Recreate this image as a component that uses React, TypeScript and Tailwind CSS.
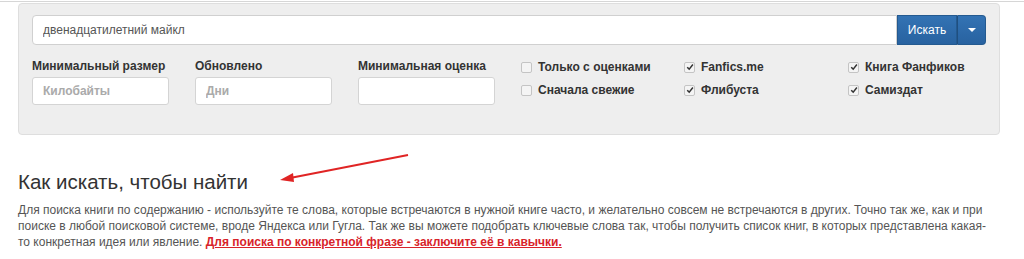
function Check({ label, checked }: { label: string; checked?: boolean }) {
    return (
        <label className="flex items-center gap-[6px] h-[20px] text-[12px] font-bold text-[#333]">
            <span className="w-[11px] h-[11px] rounded-[2px] border border-[#c4c4c4] bg-[#f4f4f4] flex items-center justify-center">
                {checked && (
                    <svg viewBox="0 0 10 10" className="w-[8px] h-[8px]">
                        <path d="M1.5 5.2 L4 7.6 L8.6 1.8" fill="none" stroke="#333" strokeWidth="1.8" />
                    </svg>
                )}
            </span>
            {label}
        </label>
    );
}

function Field({ label, placeholder }: { label: string; placeholder?: string }) {
    return (
        <div className="flex flex-col">
            <div className="text-[12px] font-bold text-[#333] h-[18px] leading-[18px] mt-[-3px]">{label}</div>
            <input
                type="text"
                placeholder={placeholder}
                className="mt-[2px] w-[137px] h-[28px] px-[10px] bg-white border border-[#d4d4d4] rounded-[3px] text-[12px] font-bold placeholder:text-[#aaa] outline-none"
            />
        </div>
    );
}

export default function App() {
    return (
        <div className="w-[1024px] h-[259px] bg-white overflow-hidden relative font-['Liberation_Sans',Arial,sans-serif]">
            <div className="h-[1px] mt-[1px] bg-[#d6d6d6]" />
            <div className="mx-[18px] w-[982px] h-[132px] mt-[1px] bg-[#eeeeee] border border-[#dedede] rounded-[4px] px-[13px] pt-[11px]">
                <div className="flex h-[30px]">
                    <input
                        type="text"
                        defaultValue="двенадцатилетний майкл"
                        className="flex-1 h-full px-[10px] bg-white border border-[#d0d0d0] rounded-l-[4px] text-[12px] text-[#555] outline-none"
                    />
                    <button className="w-[60px] h-full bg-gradient-to-b from-[#3373b4] to-[#2862a0] text-white text-[12px] border border-[#245a90]">Искать</button>
                    <button className="w-[29px] h-full bg-gradient-to-b from-[#3373b4] to-[#2862a0] border border-[#245a90] border-l-[#1f4f80] rounded-r-[4px] flex items-center justify-center">
                        <svg viewBox="0 0 8 4" className="w-[8px] h-[4px]">
                            <path d="M0 0 L8 0 L4 4 Z" fill="#fff" />
                        </svg>
                    </button>
                </div>
                <div className="grid grid-cols-[163px_163px_163px_163px_164px_1fr] mt-[15px]">
                    <Field label="Минимальный размер" placeholder="Килобайты" />
                    <Field label="Обновлено" placeholder="Дни" />
                    <Field label="Минимальная оценка" />
                    <div className="flex flex-col mt-[-3px] gap-[3px]">
                        <Check label="Только с оценками" />
                        <Check label="Сначала свежие" />
                    </div>
                    <div className="flex flex-col mt-[-3px] gap-[3px]">
                        <Check label="Fanfics.me" checked />
                        <Check label="Флибуста" checked />
                    </div>
                    <div className="flex flex-col mt-[-3px] gap-[3px]">
                        <Check label="Книга Фанфиков" checked />
                        <Check label="Самиздат" checked />
                    </div>
                </div>
            </div>
            <div className="px-[18px] pt-[34px]">
                <h2 className="text-[20.5px] leading-[25px] text-[#333]">Как искать, чтобы найти</h2>
                <p className="mt-[8px] w-[990px] text-[12px] leading-[16px] text-[#555]">
                    Для поиска книги по содержанию - используйте те слова, которые встречаются в нужной книге часто, и желательно совсем не встречаются в других. Точно так же, как и при
                    <br />
                    поиске в любой поисковой системе, вроде Яндекса или Гугла. Так же вы можете подобрать ключевые слова так, чтобы получить список книг, в которых представлена какая-
                    <br />
                    то конкретная идея или явление.{" "}
                    <a className="font-bold text-[#d8232a] underline">Для поиска по конкретной фразе - заключите её в кавычки.</a>
                </p>
            </div>
            <svg className="absolute left-[276px] top-[150px]" width="140" height="40" viewBox="0 0 140 40">
                <line x1="132" y1="5" x2="14" y2="28" stroke="#e02424" strokeWidth="2" />
                <path d="M4 30 L17 23 L18 32 Z" fill="#e02424" />
            </svg>
        </div>
    );
}
